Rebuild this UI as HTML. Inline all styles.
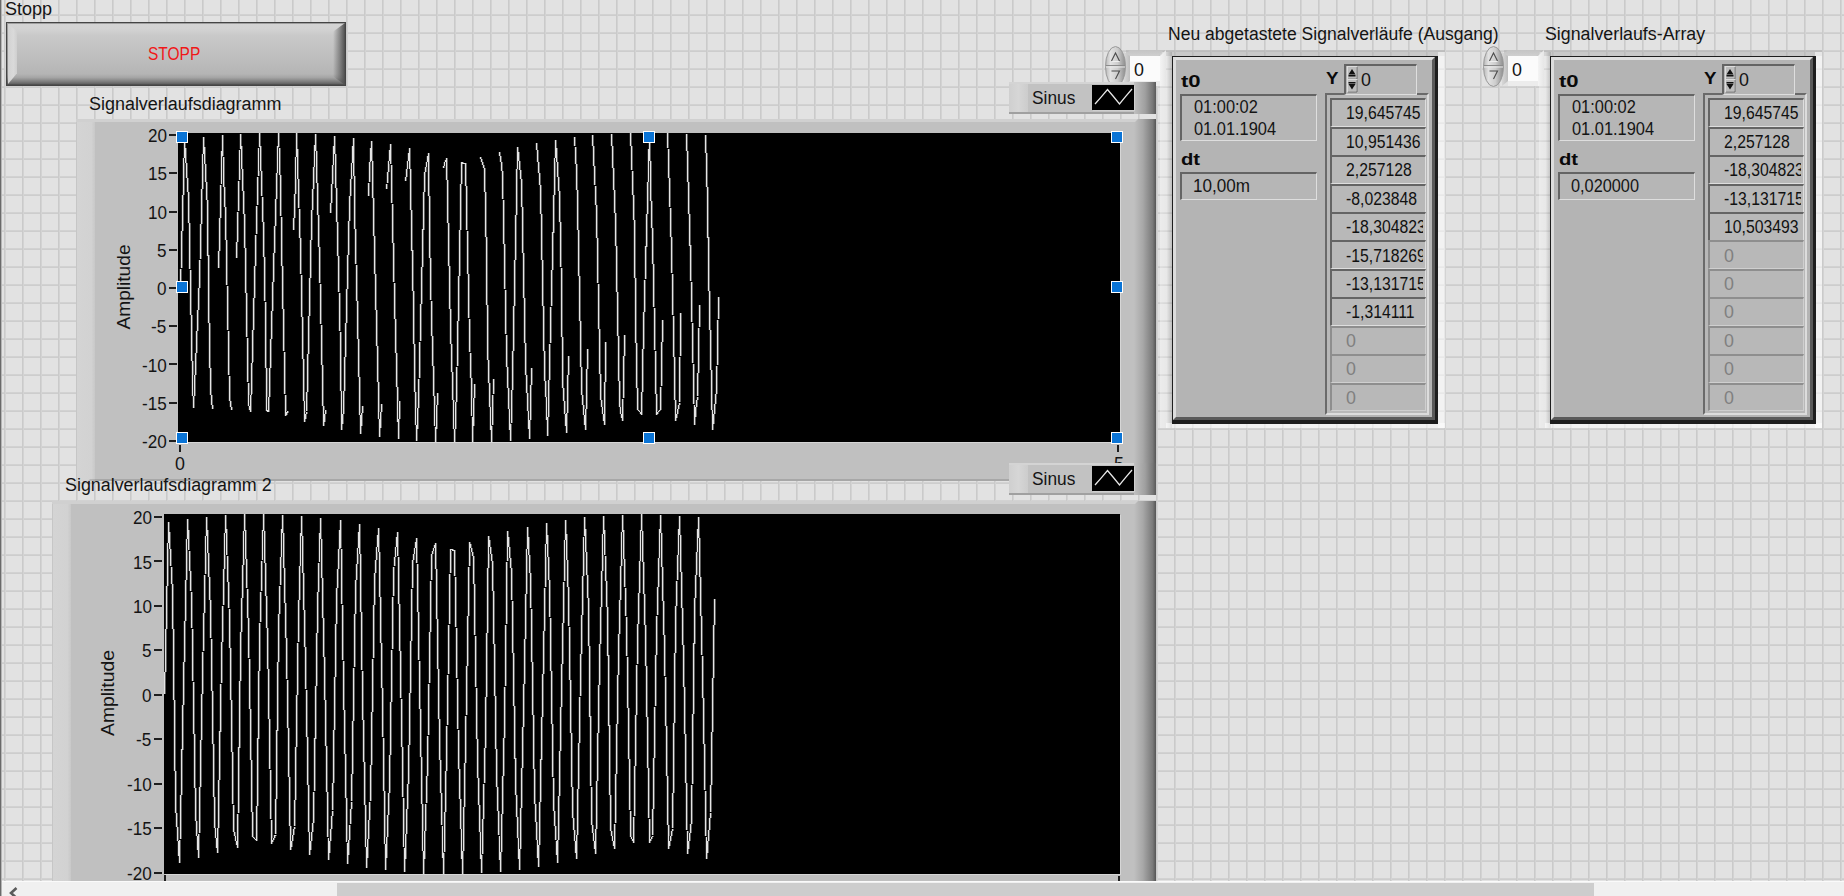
<!DOCTYPE html>
<html><head><meta charset="utf-8"><title>LabVIEW Front Panel</title>
<style>
html,body{margin:0;padding:0;width:1844px;height:896px;overflow:hidden}
body{position:relative;background-color:#e2e2e2;
background-image:linear-gradient(to right,#cacaca 0,#cacaca 1px,#d3d3d3 1px,#d3d3d3 2px,transparent 2px),linear-gradient(to bottom,#d2d2d2 0,#d2d2d2 1px,#cdcdcd 1px,#cdcdcd 2px,transparent 2px);
background-size:18px 18px,18px 18px;background-position:4px 0,0 14px;font-family:"Liberation Sans", sans-serif}
.t{position:absolute;white-space:pre;transform-origin:0 50%;display:block}
</style></head><body>
<div style="position:absolute;left:0px;top:0px;width:1px;height:896px;background:#6a6a6a;z-index:50"></div>
<div style="position:absolute;left:1px;top:0px;width:1px;height:896px;background:#b4b4b4;z-index:50"></div>
<span class="t" style="left:5.10px;top:0.06px;font-size:18px;line-height:18px;font-weight:400;color:#141414;transform:scaleX(1.0020);z-index:10">Stopp</span>
<div style="position:absolute;left:6px;top:22px;width:338px;height:62px;border:1px solid #454545;overflow:hidden;background:linear-gradient(to bottom,#d5d5d5 0,#d3d3d3 9%,#c9c9c9 20%,#c0c0c0 50%,#b5b5b5 82%,#a5a5a5 88%,#7a7a7a 95%,#555 100%);box-shadow:inset 0 0 0 1px rgba(60,60,60,.35)"><div style="position:absolute;left:1px;top:1px;width:9px;height:60px;background:linear-gradient(to right,#d2d2d2,#dadada 60%,#cfcfcf);clip-path:polygon(0 0,100% 12%,100% 82%,0 100%)"></div><div style="position:absolute;right:0;top:0;width:12px;height:62px;background:linear-gradient(to right,rgba(85,85,85,0),rgba(85,85,85,.55) 55%,#505050);clip-path:polygon(0 14%,100% 0,100% 100%,0 86%)"></div></div>
<span class="t" style="left:147.63px;top:45.06px;font-size:18px;line-height:18px;font-weight:400;color:#f01818;transform:scaleX(0.8606);z-index:10">STOPP</span>
<div style="position:absolute;left:76px;top:119px;width:1080px;height:362px;background:#c0c0c0;overflow:hidden"><div style="position:absolute;left:0;top:0;width:1px;height:100%;background:#c6c6c6"></div><div style="position:absolute;left:1px;top:0;width:18px;height:100%;background:linear-gradient(to right,#d4d4d4,#d2d2d2 80%,#c8c8c8)"></div><div style="position:absolute;left:0;top:0;width:100%;height:3px;background:#d0d0d0"></div><div style="position:absolute;left:12px;bottom:0;width:100%;height:2px;background:rgba(0,0,0,.13);clip-path:polygon(2px 0,100% 0,100% 100%,0 100%)"></div><div style="position:absolute;right:0;top:0;width:22px;height:100%;background:linear-gradient(to right,#c0c0c0,#a8a8a8 40%,#7a7a7a 85%,#555);clip-path:polygon(0 4px,4px 0,100% 0,100% 100%,0 100%)"></div></div>
<span class="t" style="left:88.70px;top:94.56px;font-size:18px;line-height:18px;font-weight:400;color:#141414;transform:scaleX(0.9966);z-index:10">Signalverlaufsdiagramm</span>
<div style="position:absolute;left:178px;top:133px;width:942px;height:309px;background:#000;box-shadow:1px 1px 0 #d6d6d6"></div>
<span class="t" style="left:147.65px;top:127.06px;font-size:18px;line-height:18px;font-weight:400;color:#141414;transform:scaleX(0.9500);z-index:10">20</span>
<div style="position:absolute;left:169px;top:134px;width:8px;height:2px;background:#1e1e1e"></div>
<span class="t" style="left:147.65px;top:165.31px;font-size:18px;line-height:18px;font-weight:400;color:#141414;transform:scaleX(0.9500);z-index:10">15</span>
<div style="position:absolute;left:169px;top:172px;width:8px;height:2px;background:#1e1e1e"></div>
<span class="t" style="left:147.65px;top:203.56px;font-size:18px;line-height:18px;font-weight:400;color:#141414;transform:scaleX(0.9500);z-index:10">10</span>
<div style="position:absolute;left:169px;top:211px;width:8px;height:2px;background:#1e1e1e"></div>
<span class="t" style="left:157.17px;top:241.81px;font-size:18px;line-height:18px;font-weight:400;color:#141414;transform:scaleX(0.9500);z-index:10">5</span>
<div style="position:absolute;left:169px;top:249px;width:8px;height:2px;background:#1e1e1e"></div>
<span class="t" style="left:157.17px;top:280.06px;font-size:18px;line-height:18px;font-weight:400;color:#141414;transform:scaleX(0.9500);z-index:10">0</span>
<div style="position:absolute;left:169px;top:287px;width:8px;height:2px;background:#1e1e1e"></div>
<span class="t" style="left:151.47px;top:318.31px;font-size:18px;line-height:18px;font-weight:400;color:#141414;transform:scaleX(0.9500);z-index:10">-5</span>
<div style="position:absolute;left:169px;top:325px;width:8px;height:2px;background:#1e1e1e"></div>
<span class="t" style="left:141.97px;top:356.56px;font-size:18px;line-height:18px;font-weight:400;color:#141414;transform:scaleX(0.9500);z-index:10">-10</span>
<div style="position:absolute;left:169px;top:363px;width:8px;height:2px;background:#1e1e1e"></div>
<span class="t" style="left:141.97px;top:394.81px;font-size:18px;line-height:18px;font-weight:400;color:#141414;transform:scaleX(0.9500);z-index:10">-15</span>
<div style="position:absolute;left:169px;top:402px;width:8px;height:2px;background:#1e1e1e"></div>
<span class="t" style="left:141.97px;top:433.06px;font-size:18px;line-height:18px;font-weight:400;color:#141414;transform:scaleX(0.9500);z-index:10">-20</span>
<div style="position:absolute;left:169px;top:440px;width:8px;height:2px;background:#1e1e1e"></div>
<span class="t" style="left:83.88px;top:277.50px;font-size:18px;line-height:18px;color:#141414;transform-origin:center;transform:rotate(-90deg) scaleX(1.0635);z-index:10">Amplitude</span>
<div style="position:absolute;left:179px;top:445px;width:2px;height:7px;background:#1e1e1e"></div>
<div style="position:absolute;left:1117px;top:445px;width:2px;height:7px;background:#1e1e1e"></div>
<span class="t" style="left:174.61px;top:455.26px;font-size:18px;line-height:18px;font-weight:400;color:#141414;transform:scaleX(0.9912);z-index:10">0</span>
<span class="t" style="left:1113.61px;top:455.26px;font-size:18px;line-height:18px;font-weight:400;color:#141414;transform:scaleX(0.9912);z-index:1">5</span>
<svg style="position:absolute;left:178px;top:133px" width="942" height="309"><g fill="none" stroke-width="1" shape-rendering="crispEdges"><g stroke="#606060"><polyline points="3.5,154.5 5.5,80.5 7.5,7.5 9.5,37.5 11.5,66.5 13.5,158.5 15.5,250.5 16.5,274.5 22.5,144.5 24.5,74.5 26.5,4.5 28.5,39.5 30.5,75.5 31.5,166.5 33.5,257.5 35.5,276.5"/><polyline points="41.5,135.5 43.5,68.5 45.5,2.5 46.5,43.5 48.5,83.5 50.5,174.5 52.5,264.5 54.5,277.5"/><polyline points="59.5,125.5 61.5,63.5 63.5,1.5 65.5,46.5 67.5,92.5 69.5,181.5 71.5,271.5 73.5,278.5 78.5,116.5 80.5,58.5 82.5,0.5 84.5,50.5 86.5,101.5 88.5,189.5 89.5,277.5 91.5,278.5 97.5,106.5 99.5,53.5 101.5,0.5 103.5,55.5 104.5,110.5 106.5,196.5 108.5,282.5 110.5,278.5"/><polyline points="116.5,97.5 118.5,49.5 119.5,0.5 121.5,60.5 123.5,119.5 125.5,204.5 127.5,288.5 129.5,278.5 134.5,88.5 136.5,45.5 138.5,1.5 140.5,65.5 142.5,129.5 144.5,211.5 146.5,292.5 148.5,277.5"/><polyline points="153.5,80.5 155.5,41.5 157.5,3.5 159.5,71.5 161.5,139.5 163.5,217.5 164.5,296.5 166.5,275.5 172.5,71.5 174.5,38.5 176.5,5.5 177.5,77.5 179.5,148.5 181.5,224.5 183.5,300.5 185.5,273.5"/><polyline points="191.5,63.5 192.5,36.5 194.5,8.5 196.5,83.5 198.5,158.5 200.5,230.5 202.5,303.5 204.5,271.5"/><polyline points="209.5,56.5 211.5,33.5 213.5,11.5 215.5,89.5 217.5,168.5 219.5,236.5 221.5,305.5 222.5,268.5"/><polyline points="228.5,48.5 230.5,32.5 232.5,15.5 234.5,96.5 236.5,177.5 237.5,242.5 239.5,307.5 241.5,264.5 247.5,41.5 249.5,31.5 251.5,20.5 252.5,103.5 254.5,187.5 256.5,247.5 258.5,308.5 260.5,260.5"/><polyline points="266.5,35.5 267.5,30.5 269.5,25.5 271.5,110.5 273.5,196.5 275.5,252.5 277.5,309.5 279.5,256.5 284.5,29.5 286.5,30.5 288.5,30.5 290.5,118.5 292.5,206.5 294.5,257.5 295.5,308.5 297.5,251.5"/><polyline points="303.5,24.5 305.5,30.5 307.5,36.5 309.5,125.5 310.5,215.5 312.5,261.5 314.5,308.5 316.5,246.5"/><polyline points="322.5,19.5 324.5,31.5 325.5,43.5 327.5,133.5 329.5,223.5 331.5,265.5 333.5,307.5 335.5,241.5 340.5,14.5 342.5,32.5 344.5,50.5 346.5,141.5 348.5,232.5 350.5,268.5 352.5,305.5 354.5,235.5"/><polyline points="359.5,10.5 361.5,34.5 363.5,57.5 365.5,149.5 367.5,240.5 369.5,271.5 370.5,302.5 372.5,229.5 378.5,7.5 380.5,36.5 382.5,65.5 384.5,156.5 385.5,248.5 387.5,274.5 389.5,299.5 391.5,223.5"/><polyline points="397.5,4.5 399.5,39.5 400.5,73.5 402.5,164.5 404.5,256.5 406.5,276.5 408.5,296.5 410.5,216.5"/><polyline points="415.5,2.5 417.5,42.5 419.5,81.5 421.5,172.5 423.5,263.5 425.5,277.5 427.5,291.5 428.5,209.5"/><polyline points="434.5,1.5 436.5,45.5 438.5,90.5 440.5,180.5 442.5,269.5 443.5,278.5 445.5,287.5 447.5,202.5"/><polyline points="453.5,0.5 455.5,49.5 457.5,99.5 458.5,187.5 460.5,276.5 462.5,278.5 464.5,281.5 466.5,195.5 472.5,0.5 473.5,54.5 475.5,108.5 477.5,195.5 479.5,281.5 481.5,278.5 483.5,276.5 485.5,187.5"/><polyline points="490.5,0.5 492.5,59.5 494.5,118.5 496.5,202.5 498.5,287.5 500.5,278.5 502.5,269.5 503.5,180.5"/><polyline points="509.5,1.5 511.5,64.5 513.5,127.5 515.5,209.5 517.5,291.5 518.5,277.5 520.5,263.5 522.5,172.5"/><polyline points="528.5,2.5 530.5,70.5 531.5,137.5 533.5,216.5 535.5,296.5 537.5,276.5 539.5,256.5 541.5,164.5"/></g><g stroke="#282828"><polyline points="1.5,154.5 3.5,80.5 5.5,7.5 7.5,37.5 9.5,66.5 11.5,158.5 13.5,250.5 14.5,274.5 20.5,144.5 22.5,74.5 24.5,4.5 26.5,39.5 28.5,75.5 29.5,166.5 31.5,257.5 33.5,276.5"/><polyline points="39.5,135.5 41.5,68.5 43.5,2.5 44.5,43.5 46.5,83.5 48.5,174.5 50.5,264.5 52.5,277.5"/><polyline points="57.5,125.5 59.5,63.5 61.5,1.5 63.5,46.5 65.5,92.5 67.5,181.5 69.5,271.5 71.5,278.5 76.5,116.5 78.5,58.5 80.5,0.5 82.5,50.5 84.5,101.5 86.5,189.5 87.5,277.5 89.5,278.5 95.5,106.5 97.5,53.5 99.5,0.5 101.5,55.5 102.5,110.5 104.5,196.5 106.5,282.5 108.5,278.5"/><polyline points="114.5,97.5 116.5,49.5 117.5,0.5 119.5,60.5 121.5,119.5 123.5,204.5 125.5,288.5 127.5,278.5 132.5,88.5 134.5,45.5 136.5,1.5 138.5,65.5 140.5,129.5 142.5,211.5 144.5,292.5 146.5,277.5"/><polyline points="151.5,80.5 153.5,41.5 155.5,3.5 157.5,71.5 159.5,139.5 161.5,217.5 162.5,296.5 164.5,275.5 170.5,71.5 172.5,38.5 174.5,5.5 175.5,77.5 177.5,148.5 179.5,224.5 181.5,300.5 183.5,273.5"/><polyline points="189.5,63.5 190.5,36.5 192.5,8.5 194.5,83.5 196.5,158.5 198.5,230.5 200.5,303.5 202.5,271.5"/><polyline points="207.5,56.5 209.5,33.5 211.5,11.5 213.5,89.5 215.5,168.5 217.5,236.5 219.5,305.5 220.5,268.5"/><polyline points="226.5,48.5 228.5,32.5 230.5,15.5 232.5,96.5 234.5,177.5 235.5,242.5 237.5,307.5 239.5,264.5 245.5,41.5 247.5,31.5 249.5,20.5 250.5,103.5 252.5,187.5 254.5,247.5 256.5,308.5 258.5,260.5"/><polyline points="264.5,35.5 265.5,30.5 267.5,25.5 269.5,110.5 271.5,196.5 273.5,252.5 275.5,309.5 277.5,256.5 282.5,29.5 284.5,30.5 286.5,30.5 288.5,118.5 290.5,206.5 292.5,257.5 293.5,308.5 295.5,251.5"/><polyline points="301.5,24.5 303.5,30.5 305.5,36.5 307.5,125.5 308.5,215.5 310.5,261.5 312.5,308.5 314.5,246.5"/><polyline points="320.5,19.5 322.5,31.5 323.5,43.5 325.5,133.5 327.5,223.5 329.5,265.5 331.5,307.5 333.5,241.5 338.5,14.5 340.5,32.5 342.5,50.5 344.5,141.5 346.5,232.5 348.5,268.5 350.5,305.5 352.5,235.5"/><polyline points="357.5,10.5 359.5,34.5 361.5,57.5 363.5,149.5 365.5,240.5 367.5,271.5 368.5,302.5 370.5,229.5 376.5,7.5 378.5,36.5 380.5,65.5 382.5,156.5 383.5,248.5 385.5,274.5 387.5,299.5 389.5,223.5"/><polyline points="395.5,4.5 397.5,39.5 398.5,73.5 400.5,164.5 402.5,256.5 404.5,276.5 406.5,296.5 408.5,216.5"/><polyline points="413.5,2.5 415.5,42.5 417.5,81.5 419.5,172.5 421.5,263.5 423.5,277.5 425.5,291.5 426.5,209.5"/><polyline points="432.5,1.5 434.5,45.5 436.5,90.5 438.5,180.5 440.5,269.5 441.5,278.5 443.5,287.5 445.5,202.5"/><polyline points="451.5,0.5 453.5,49.5 455.5,99.5 456.5,187.5 458.5,276.5 460.5,278.5 462.5,281.5 464.5,195.5 470.5,0.5 471.5,54.5 473.5,108.5 475.5,195.5 477.5,281.5 479.5,278.5 481.5,276.5 483.5,187.5"/><polyline points="488.5,0.5 490.5,59.5 492.5,118.5 494.5,202.5 496.5,287.5 498.5,278.5 500.5,269.5 501.5,180.5"/><polyline points="507.5,1.5 509.5,64.5 511.5,127.5 513.5,209.5 515.5,291.5 516.5,277.5 518.5,263.5 520.5,172.5"/><polyline points="526.5,2.5 528.5,70.5 529.5,137.5 531.5,216.5 533.5,296.5 535.5,276.5 537.5,256.5 539.5,164.5"/></g><g stroke="#e4e4e4"><polyline points="2.5,154.5 4.5,80.5 6.5,7.5 8.5,37.5 10.5,66.5 12.5,158.5 14.5,250.5 15.5,274.5 21.5,144.5 23.5,74.5 25.5,4.5 27.5,39.5 29.5,75.5 30.5,166.5 32.5,257.5 34.5,276.5"/><polyline points="40.5,135.5 42.5,68.5 44.5,2.5 45.5,43.5 47.5,83.5 49.5,174.5 51.5,264.5 53.5,277.5"/><polyline points="58.5,125.5 60.5,63.5 62.5,1.5 64.5,46.5 66.5,92.5 68.5,181.5 70.5,271.5 72.5,278.5 77.5,116.5 79.5,58.5 81.5,0.5 83.5,50.5 85.5,101.5 87.5,189.5 88.5,277.5 90.5,278.5 96.5,106.5 98.5,53.5 100.5,0.5 102.5,55.5 103.5,110.5 105.5,196.5 107.5,282.5 109.5,278.5"/><polyline points="115.5,97.5 117.5,49.5 118.5,0.5 120.5,60.5 122.5,119.5 124.5,204.5 126.5,288.5 128.5,278.5 133.5,88.5 135.5,45.5 137.5,1.5 139.5,65.5 141.5,129.5 143.5,211.5 145.5,292.5 147.5,277.5"/><polyline points="152.5,80.5 154.5,41.5 156.5,3.5 158.5,71.5 160.5,139.5 162.5,217.5 163.5,296.5 165.5,275.5 171.5,71.5 173.5,38.5 175.5,5.5 176.5,77.5 178.5,148.5 180.5,224.5 182.5,300.5 184.5,273.5"/><polyline points="190.5,63.5 191.5,36.5 193.5,8.5 195.5,83.5 197.5,158.5 199.5,230.5 201.5,303.5 203.5,271.5"/><polyline points="208.5,56.5 210.5,33.5 212.5,11.5 214.5,89.5 216.5,168.5 218.5,236.5 220.5,305.5 221.5,268.5"/><polyline points="227.5,48.5 229.5,32.5 231.5,15.5 233.5,96.5 235.5,177.5 236.5,242.5 238.5,307.5 240.5,264.5 246.5,41.5 248.5,31.5 250.5,20.5 251.5,103.5 253.5,187.5 255.5,247.5 257.5,308.5 259.5,260.5"/><polyline points="265.5,35.5 266.5,30.5 268.5,25.5 270.5,110.5 272.5,196.5 274.5,252.5 276.5,309.5 278.5,256.5 283.5,29.5 285.5,30.5 287.5,30.5 289.5,118.5 291.5,206.5 293.5,257.5 294.5,308.5 296.5,251.5"/><polyline points="302.5,24.5 304.5,30.5 306.5,36.5 308.5,125.5 309.5,215.5 311.5,261.5 313.5,308.5 315.5,246.5"/><polyline points="321.5,19.5 323.5,31.5 324.5,43.5 326.5,133.5 328.5,223.5 330.5,265.5 332.5,307.5 334.5,241.5 339.5,14.5 341.5,32.5 343.5,50.5 345.5,141.5 347.5,232.5 349.5,268.5 351.5,305.5 353.5,235.5"/><polyline points="358.5,10.5 360.5,34.5 362.5,57.5 364.5,149.5 366.5,240.5 368.5,271.5 369.5,302.5 371.5,229.5 377.5,7.5 379.5,36.5 381.5,65.5 383.5,156.5 384.5,248.5 386.5,274.5 388.5,299.5 390.5,223.5"/><polyline points="396.5,4.5 398.5,39.5 399.5,73.5 401.5,164.5 403.5,256.5 405.5,276.5 407.5,296.5 409.5,216.5"/><polyline points="414.5,2.5 416.5,42.5 418.5,81.5 420.5,172.5 422.5,263.5 424.5,277.5 426.5,291.5 427.5,209.5"/><polyline points="433.5,1.5 435.5,45.5 437.5,90.5 439.5,180.5 441.5,269.5 442.5,278.5 444.5,287.5 446.5,202.5"/><polyline points="452.5,0.5 454.5,49.5 456.5,99.5 457.5,187.5 459.5,276.5 461.5,278.5 463.5,281.5 465.5,195.5 471.5,0.5 472.5,54.5 474.5,108.5 476.5,195.5 478.5,281.5 480.5,278.5 482.5,276.5 484.5,187.5"/><polyline points="489.5,0.5 491.5,59.5 493.5,118.5 495.5,202.5 497.5,287.5 499.5,278.5 501.5,269.5 502.5,180.5"/><polyline points="508.5,1.5 510.5,64.5 512.5,127.5 514.5,209.5 516.5,291.5 517.5,277.5 519.5,263.5 521.5,172.5"/><polyline points="527.5,2.5 529.5,70.5 530.5,137.5 532.5,216.5 534.5,296.5 536.5,276.5 538.5,256.5 540.5,164.5"/></g></g></svg>
<div style="position:absolute;left:176px;top:131px;width:10px;height:10px;background:#0a74d6;border:1px solid #fff;z-index:5"></div>
<div style="position:absolute;left:176px;top:281px;width:10px;height:10px;background:#0a74d6;border:1px solid #fff;z-index:5"></div>
<div style="position:absolute;left:176px;top:432px;width:10px;height:10px;background:#0a74d6;border:1px solid #fff;z-index:5"></div>
<div style="position:absolute;left:643px;top:131px;width:10px;height:10px;background:#0a74d6;border:1px solid #fff;z-index:5"></div>
<div style="position:absolute;left:643px;top:432px;width:10px;height:10px;background:#0a74d6;border:1px solid #fff;z-index:5"></div>
<div style="position:absolute;left:1111px;top:131px;width:10px;height:10px;background:#0a74d6;border:1px solid #fff;z-index:5"></div>
<div style="position:absolute;left:1111px;top:281px;width:10px;height:10px;background:#0a74d6;border:1px solid #fff;z-index:5"></div>
<div style="position:absolute;left:1111px;top:432px;width:10px;height:10px;background:#0a74d6;border:1px solid #fff;z-index:5"></div>
<div style="position:absolute;left:1009px;top:82px;width:147px;height:32px;background:#c2c2c2;overflow:hidden;z-index:15"><div style="position:absolute;left:0;top:0;width:19px;height:100%;background:linear-gradient(to right,#cfcfcf,#d6d6d6 50%,#cccccc)"></div><div style="position:absolute;left:0;top:0;width:100%;height:2px;background:#d4d4d4"></div><div style="position:absolute;left:0;bottom:0;width:100%;height:2px;background:#a0a0a0"></div><div style="position:absolute;right:0;top:0;width:22px;height:100%;background:linear-gradient(to right,#c0c0c0,#a0a0a0 50%,#777 85%,#5a5a5a)"></div><div style="position:absolute;left:83px;top:3px;width:42px;height:25px;background:#000;box-shadow:1px 1px 0 #d0d0d0"><svg width="42" height="25" style="position:absolute;left:0;top:0"><polyline points="3,19 9.5,11.6 15.5,4.5 21,11 27.5,19 33.5,11.6 40,4" fill="none" stroke="#e8e8e8" stroke-width="1.3"/></svg></div></div>
<span class="t" style="left:1032.33px;top:88.56px;font-size:18px;line-height:18px;font-weight:400;color:#141414;transform:scaleX(0.9612);z-index:20">Sinus</span>
<div style="position:absolute;left:52px;top:501px;width:1104px;height:395px;background:#c0c0c0;overflow:hidden"><div style="position:absolute;left:0;top:0;width:1px;height:100%;background:#c6c6c6"></div><div style="position:absolute;left:1px;top:0;width:18px;height:100%;background:linear-gradient(to right,#d4d4d4,#d2d2d2 80%,#c8c8c8)"></div><div style="position:absolute;left:0;top:0;width:100%;height:3px;background:#d0d0d0"></div><div style="position:absolute;left:12px;bottom:0;width:100%;height:2px;background:rgba(0,0,0,.13);clip-path:polygon(2px 0,100% 0,100% 100%,0 100%)"></div><div style="position:absolute;right:0;top:0;width:22px;height:100%;background:linear-gradient(to right,#c0c0c0,#a8a8a8 40%,#7a7a7a 85%,#555);clip-path:polygon(0 4px,4px 0,100% 0,100% 100%,0 100%)"></div></div>
<div style="position:absolute;left:164px;top:514px;width:956px;height:360px;background:#000;box-shadow:1px 1px 0 #d6d6d6"></div>
<span class="t" style="left:132.65px;top:509.06px;font-size:18px;line-height:18px;font-weight:400;color:#141414;transform:scaleX(0.9500);z-index:10">20</span>
<div style="position:absolute;left:154px;top:516px;width:8px;height:2px;background:#1e1e1e"></div>
<span class="t" style="left:132.65px;top:553.51px;font-size:18px;line-height:18px;font-weight:400;color:#141414;transform:scaleX(0.9500);z-index:10">15</span>
<div style="position:absolute;left:154px;top:560px;width:8px;height:2px;background:#1e1e1e"></div>
<span class="t" style="left:132.65px;top:597.96px;font-size:18px;line-height:18px;font-weight:400;color:#141414;transform:scaleX(0.9500);z-index:10">10</span>
<div style="position:absolute;left:154px;top:605px;width:8px;height:2px;background:#1e1e1e"></div>
<span class="t" style="left:142.17px;top:642.41px;font-size:18px;line-height:18px;font-weight:400;color:#141414;transform:scaleX(0.9500);z-index:10">5</span>
<div style="position:absolute;left:154px;top:649px;width:8px;height:2px;background:#1e1e1e"></div>
<span class="t" style="left:142.17px;top:686.86px;font-size:18px;line-height:18px;font-weight:400;color:#141414;transform:scaleX(0.9500);z-index:10">0</span>
<div style="position:absolute;left:154px;top:694px;width:8px;height:2px;background:#1e1e1e"></div>
<span class="t" style="left:136.47px;top:731.31px;font-size:18px;line-height:18px;font-weight:400;color:#141414;transform:scaleX(0.9500);z-index:10">-5</span>
<div style="position:absolute;left:154px;top:738px;width:8px;height:2px;background:#1e1e1e"></div>
<span class="t" style="left:126.97px;top:775.76px;font-size:18px;line-height:18px;font-weight:400;color:#141414;transform:scaleX(0.9500);z-index:10">-10</span>
<div style="position:absolute;left:154px;top:783px;width:8px;height:2px;background:#1e1e1e"></div>
<span class="t" style="left:126.97px;top:820.21px;font-size:18px;line-height:18px;font-weight:400;color:#141414;transform:scaleX(0.9500);z-index:10">-15</span>
<div style="position:absolute;left:154px;top:827px;width:8px;height:2px;background:#1e1e1e"></div>
<span class="t" style="left:126.97px;top:864.66px;font-size:18px;line-height:18px;font-weight:400;color:#141414;transform:scaleX(0.9500);z-index:10">-20</span>
<div style="position:absolute;left:154px;top:872px;width:8px;height:2px;background:#1e1e1e"></div>
<span class="t" style="left:68.48px;top:683.80px;font-size:18px;line-height:18px;color:#141414;transform-origin:center;transform:rotate(-90deg) scaleX(1.0750);z-index:10">Amplitude</span>
<svg style="position:absolute;left:164px;top:514px" width="956" height="360"><g fill="none" stroke-width="1" shape-rendering="crispEdges"><g stroke="#606060"><polyline points="1.5,180.5 5.5,8.5 9.5,78.5 12.5,291.5 16.5,348.5 20.5,169.5 24.5,5.5 28.5,87.5 32.5,299.5 35.5,343.5 39.5,157.5 43.5,3.5 47.5,97.5 51.5,308.5 54.5,338.5 58.5,146.5 62.5,1.5 66.5,107.5 70.5,315.5 74.5,333.5 77.5,135.5 81.5,0.5 85.5,118.5 89.5,322.5 93.5,326.5 96.5,124.5 100.5,0.5 104.5,129.5 108.5,329.5 112.5,320.5 115.5,114.5 119.5,1.5 123.5,140.5 127.5,335.5 131.5,312.5 135.5,103.5 138.5,2.5 142.5,151.5 146.5,340.5 150.5,304.5 154.5,93.5 157.5,4.5 161.5,162.5 165.5,345.5 169.5,296.5 173.5,84.5 177.5,6.5 180.5,173.5 184.5,349.5 188.5,287.5 192.5,74.5 196.5,10.5 199.5,184.5 203.5,353.5 207.5,278.5 211.5,65.5 215.5,14.5 219.5,196.5 222.5,355.5 226.5,268.5 230.5,57.5 234.5,18.5 238.5,207.5 241.5,357.5 245.5,258.5 249.5,49.5 253.5,24.5 257.5,218.5 260.5,359.5 264.5,248.5 268.5,41.5 272.5,29.5 276.5,229.5 280.5,359.5 283.5,237.5 287.5,35.5 291.5,36.5 295.5,240.5 299.5,359.5 302.5,227.5 306.5,28.5 310.5,43.5 314.5,250.5 318.5,358.5 322.5,216.5 325.5,22.5 329.5,50.5 333.5,260.5 337.5,357.5 341.5,205.5 344.5,17.5 348.5,59.5 352.5,270.5 356.5,355.5 360.5,193.5 364.5,13.5 367.5,67.5 371.5,280.5 375.5,352.5 379.5,182.5 383.5,9.5 386.5,76.5 390.5,289.5 394.5,348.5 398.5,171.5 402.5,6.5 405.5,85.5 409.5,298.5 413.5,344.5 417.5,160.5 421.5,3.5 425.5,95.5 428.5,306.5 432.5,339.5 436.5,148.5 440.5,2.5 444.5,105.5 447.5,314.5 451.5,334.5 455.5,137.5 459.5,1.5 463.5,116.5 467.5,321.5 470.5,328.5 474.5,126.5 478.5,0.5 482.5,126.5 486.5,328.5 489.5,321.5 493.5,116.5 497.5,1.5 501.5,137.5 505.5,334.5 509.5,314.5 512.5,105.5 516.5,2.5 520.5,148.5 524.5,339.5 528.5,306.5 531.5,95.5 535.5,3.5 539.5,160.5 543.5,344.5 547.5,298.5 551.5,85.5"/></g><g stroke="#282828"><polyline points="-0.5,180.5 3.5,8.5 7.5,78.5 10.5,291.5 14.5,348.5 18.5,169.5 22.5,5.5 26.5,87.5 30.5,299.5 33.5,343.5 37.5,157.5 41.5,3.5 45.5,97.5 49.5,308.5 52.5,338.5 56.5,146.5 60.5,1.5 64.5,107.5 68.5,315.5 72.5,333.5 75.5,135.5 79.5,0.5 83.5,118.5 87.5,322.5 91.5,326.5 94.5,124.5 98.5,0.5 102.5,129.5 106.5,329.5 110.5,320.5 113.5,114.5 117.5,1.5 121.5,140.5 125.5,335.5 129.5,312.5 133.5,103.5 136.5,2.5 140.5,151.5 144.5,340.5 148.5,304.5 152.5,93.5 155.5,4.5 159.5,162.5 163.5,345.5 167.5,296.5 171.5,84.5 175.5,6.5 178.5,173.5 182.5,349.5 186.5,287.5 190.5,74.5 194.5,10.5 197.5,184.5 201.5,353.5 205.5,278.5 209.5,65.5 213.5,14.5 217.5,196.5 220.5,355.5 224.5,268.5 228.5,57.5 232.5,18.5 236.5,207.5 239.5,357.5 243.5,258.5 247.5,49.5 251.5,24.5 255.5,218.5 258.5,359.5 262.5,248.5 266.5,41.5 270.5,29.5 274.5,229.5 278.5,359.5 281.5,237.5 285.5,35.5 289.5,36.5 293.5,240.5 297.5,359.5 300.5,227.5 304.5,28.5 308.5,43.5 312.5,250.5 316.5,358.5 320.5,216.5 323.5,22.5 327.5,50.5 331.5,260.5 335.5,357.5 339.5,205.5 342.5,17.5 346.5,59.5 350.5,270.5 354.5,355.5 358.5,193.5 362.5,13.5 365.5,67.5 369.5,280.5 373.5,352.5 377.5,182.5 381.5,9.5 384.5,76.5 388.5,289.5 392.5,348.5 396.5,171.5 400.5,6.5 403.5,85.5 407.5,298.5 411.5,344.5 415.5,160.5 419.5,3.5 423.5,95.5 426.5,306.5 430.5,339.5 434.5,148.5 438.5,2.5 442.5,105.5 445.5,314.5 449.5,334.5 453.5,137.5 457.5,1.5 461.5,116.5 465.5,321.5 468.5,328.5 472.5,126.5 476.5,0.5 480.5,126.5 484.5,328.5 487.5,321.5 491.5,116.5 495.5,1.5 499.5,137.5 503.5,334.5 507.5,314.5 510.5,105.5 514.5,2.5 518.5,148.5 522.5,339.5 526.5,306.5 529.5,95.5 533.5,3.5 537.5,160.5 541.5,344.5 545.5,298.5 549.5,85.5"/></g><g stroke="#e4e4e4"><polyline points="0.5,180.5 4.5,8.5 8.5,78.5 11.5,291.5 15.5,348.5 19.5,169.5 23.5,5.5 27.5,87.5 31.5,299.5 34.5,343.5 38.5,157.5 42.5,3.5 46.5,97.5 50.5,308.5 53.5,338.5 57.5,146.5 61.5,1.5 65.5,107.5 69.5,315.5 73.5,333.5 76.5,135.5 80.5,0.5 84.5,118.5 88.5,322.5 92.5,326.5 95.5,124.5 99.5,0.5 103.5,129.5 107.5,329.5 111.5,320.5 114.5,114.5 118.5,1.5 122.5,140.5 126.5,335.5 130.5,312.5 134.5,103.5 137.5,2.5 141.5,151.5 145.5,340.5 149.5,304.5 153.5,93.5 156.5,4.5 160.5,162.5 164.5,345.5 168.5,296.5 172.5,84.5 176.5,6.5 179.5,173.5 183.5,349.5 187.5,287.5 191.5,74.5 195.5,10.5 198.5,184.5 202.5,353.5 206.5,278.5 210.5,65.5 214.5,14.5 218.5,196.5 221.5,355.5 225.5,268.5 229.5,57.5 233.5,18.5 237.5,207.5 240.5,357.5 244.5,258.5 248.5,49.5 252.5,24.5 256.5,218.5 259.5,359.5 263.5,248.5 267.5,41.5 271.5,29.5 275.5,229.5 279.5,359.5 282.5,237.5 286.5,35.5 290.5,36.5 294.5,240.5 298.5,359.5 301.5,227.5 305.5,28.5 309.5,43.5 313.5,250.5 317.5,358.5 321.5,216.5 324.5,22.5 328.5,50.5 332.5,260.5 336.5,357.5 340.5,205.5 343.5,17.5 347.5,59.5 351.5,270.5 355.5,355.5 359.5,193.5 363.5,13.5 366.5,67.5 370.5,280.5 374.5,352.5 378.5,182.5 382.5,9.5 385.5,76.5 389.5,289.5 393.5,348.5 397.5,171.5 401.5,6.5 404.5,85.5 408.5,298.5 412.5,344.5 416.5,160.5 420.5,3.5 424.5,95.5 427.5,306.5 431.5,339.5 435.5,148.5 439.5,2.5 443.5,105.5 446.5,314.5 450.5,334.5 454.5,137.5 458.5,1.5 462.5,116.5 466.5,321.5 469.5,328.5 473.5,126.5 477.5,0.5 481.5,126.5 485.5,328.5 488.5,321.5 492.5,116.5 496.5,1.5 500.5,137.5 504.5,334.5 508.5,314.5 511.5,105.5 515.5,2.5 519.5,148.5 523.5,339.5 527.5,306.5 530.5,95.5 534.5,3.5 538.5,160.5 542.5,344.5 546.5,298.5 550.5,85.5"/></g></g></svg>
<span class="t" style="left:64.71px;top:475.86px;font-size:18px;line-height:18px;font-weight:400;color:#141414;transform:scaleX(0.9929);z-index:20">Signalverlaufsdiagramm 2</span>
<div style="position:absolute;left:1009px;top:463px;width:147px;height:32px;background:#c2c2c2;overflow:hidden;z-index:15"><div style="position:absolute;left:0;top:0;width:19px;height:100%;background:linear-gradient(to right,#cfcfcf,#d6d6d6 50%,#cccccc)"></div><div style="position:absolute;left:0;top:0;width:100%;height:2px;background:#d4d4d4"></div><div style="position:absolute;left:0;bottom:0;width:100%;height:2px;background:#a0a0a0"></div><div style="position:absolute;right:0;top:0;width:22px;height:100%;background:linear-gradient(to right,#c0c0c0,#a0a0a0 50%,#777 85%,#5a5a5a)"></div><div style="position:absolute;left:83px;top:3px;width:42px;height:25px;background:#000;box-shadow:1px 1px 0 #d0d0d0"><svg width="42" height="25" style="position:absolute;left:0;top:0"><polyline points="3,19 9.5,11.6 15.5,4.5 21,11 27.5,19 33.5,11.6 40,4" fill="none" stroke="#e8e8e8" stroke-width="1.3"/></svg></div></div>
<span class="t" style="left:1032.33px;top:469.56px;font-size:18px;line-height:18px;font-weight:400;color:#141414;transform:scaleX(0.9612);z-index:20">Sinus</span>
<div style="position:absolute;left:164px;top:875px;width:2px;height:6px;background:#1e1e1e"></div>
<div style="position:absolute;left:1118px;top:876px;width:2px;height:5px;background:#1e1e1e"></div>
<div style="position:absolute;left:0px;top:881px;width:1844px;height:15px;background:#f0f0f0;border-top:1px solid #fafafa;z-index:30"></div>
<div style="position:absolute;left:337px;top:883px;width:1257px;height:13px;background:#cdcdcd;z-index:31"></div>
<svg style="position:absolute;left:6px;top:886px;z-index:32" width="14" height="10"><polyline points="10.5,2 5,7 10.5,12" fill="none" stroke="#5a5a5a" stroke-width="2.6"/></svg>
<div style="position:absolute;left:1126px;top:50px;width:36px;height:6px;background:rgba(170,170,170,.45)"></div>
<div style="position:absolute;left:1160px;top:50px;width:285px;height:6px;background:rgba(170,170,170,.45)"></div>
<div style="position:absolute;left:1160px;top:52px;width:12px;height:376px;background:linear-gradient(to right,rgba(255,255,255,.35),rgba(255,255,255,.2) 55%,rgba(110,110,110,.3))"></div>
<div style="position:absolute;left:1438px;top:52px;width:7px;height:376px;background:rgba(255,255,255,.55)"></div>
<div style="position:absolute;left:1166px;top:423px;width:279px;height:5px;background:rgba(255,255,255,.55)"></div>
<svg style="position:absolute;left:1105px;top:46px;z-index:4" width="22" height="42"><defs><linearGradient id="sg1105" x1="0" x2="1" y1="0" y2="0"><stop offset="0" stop-color="#b8b8b8"/><stop offset=".25" stop-color="#e2e2e2"/><stop offset=".6" stop-color="#cdcdcd"/><stop offset="1" stop-color="#8c8c8c"/></linearGradient></defs><ellipse cx="10.5" cy="20.5" rx="10" ry="20" fill="url(#sg1105)" stroke="#9a9a9a" stroke-width="1"/><line x1="1" y1="19.5" x2="20" y2="19.5" stroke="#8a8a8a" stroke-width="1"/><line x1="1" y1="21" x2="20" y2="21" stroke="#e8e8e8" stroke-width="1"/><path d="M6.5,15 L10.5,7 L14.5,15" fill="none" stroke="#4a4a4a" stroke-width="1.1"/><path d="M6.5,15.5 L14.5,15.5" stroke="#eeeeee" stroke-width="1"/><path d="M6.5,25 L14.5,25 L10.5,33" fill="none" stroke="#4a4a4a" stroke-width="1.1"/></svg>
<div style="position:absolute;left:1124px;top:50px;width:40px;height:6px;background:linear-gradient(to bottom,#c4c4c4,#cfcfcf);clip-path:polygon(0 100%,6px 0,100% 0,calc(100% - 6px) 100%)"></div>
<div style="position:absolute;left:1124px;top:52px;width:6px;height:34px;background:linear-gradient(to right,#d8d8d8,#bdbdbd);clip-path:polygon(0 0,100% 4px,100% calc(100% - 5px),0 100%)"></div>
<div style="position:absolute;left:1130px;top:81px;width:34px;height:5px;background:#ececec"></div>
<div style="position:absolute;left:1160px;top:50px;width:6px;height:36px;background:linear-gradient(to right,#f4f4f4,#e6e6e6);clip-path:polygon(0 6px,100% 0,100% 100%,0 100%)"></div>
<div style="position:absolute;left:1130px;top:56px;width:30px;height:25px;background:#fbfbfb;z-index:4"></div>
<span class="t" style="left:1133.61px;top:61.26px;font-size:18px;line-height:18px;font-weight:400;color:#141414;transform:scaleX(0.9912);z-index:10">0</span>
<div style="position:absolute;left:1504px;top:50px;width:36px;height:6px;background:rgba(170,170,170,.45)"></div>
<div style="position:absolute;left:1539px;top:50px;width:283px;height:6px;background:rgba(170,170,170,.45)"></div>
<div style="position:absolute;left:1539px;top:52px;width:12px;height:376px;background:linear-gradient(to right,rgba(255,255,255,.35),rgba(255,255,255,.2) 55%,rgba(110,110,110,.3))"></div>
<div style="position:absolute;left:1815px;top:52px;width:7px;height:376px;background:rgba(255,255,255,.55)"></div>
<div style="position:absolute;left:1545px;top:423px;width:277px;height:5px;background:rgba(255,255,255,.55)"></div>
<svg style="position:absolute;left:1483px;top:46px;z-index:4" width="22" height="42"><defs><linearGradient id="sg1483" x1="0" x2="1" y1="0" y2="0"><stop offset="0" stop-color="#b8b8b8"/><stop offset=".25" stop-color="#e2e2e2"/><stop offset=".6" stop-color="#cdcdcd"/><stop offset="1" stop-color="#8c8c8c"/></linearGradient></defs><ellipse cx="10.5" cy="20.5" rx="10" ry="20" fill="url(#sg1483)" stroke="#9a9a9a" stroke-width="1"/><line x1="1" y1="19.5" x2="20" y2="19.5" stroke="#8a8a8a" stroke-width="1"/><line x1="1" y1="21" x2="20" y2="21" stroke="#e8e8e8" stroke-width="1"/><path d="M6.5,15 L10.5,7 L14.5,15" fill="none" stroke="#4a4a4a" stroke-width="1.1"/><path d="M6.5,15.5 L14.5,15.5" stroke="#eeeeee" stroke-width="1"/><path d="M6.5,25 L14.5,25 L10.5,33" fill="none" stroke="#4a4a4a" stroke-width="1.1"/></svg>
<div style="position:absolute;left:1502px;top:50px;width:40px;height:6px;background:linear-gradient(to bottom,#c4c4c4,#cfcfcf);clip-path:polygon(0 100%,6px 0,100% 0,calc(100% - 6px) 100%)"></div>
<div style="position:absolute;left:1502px;top:52px;width:6px;height:34px;background:linear-gradient(to right,#d8d8d8,#bdbdbd);clip-path:polygon(0 0,100% 4px,100% calc(100% - 5px),0 100%)"></div>
<div style="position:absolute;left:1508px;top:81px;width:34px;height:5px;background:#ececec"></div>
<div style="position:absolute;left:1538px;top:50px;width:6px;height:36px;background:linear-gradient(to right,#f4f4f4,#e6e6e6);clip-path:polygon(0 6px,100% 0,100% 100%,0 100%)"></div>
<div style="position:absolute;left:1508px;top:56px;width:30px;height:25px;background:#fbfbfb;z-index:4"></div>
<span class="t" style="left:1511.61px;top:61.26px;font-size:18px;line-height:18px;font-weight:400;color:#141414;transform:scaleX(0.9912);z-index:10">0</span>
<span class="t" style="left:1168.02px;top:25.36px;font-size:18px;line-height:18px;font-weight:400;color:#141414;transform:scaleX(0.9746);z-index:10">Neu abgetastete Signalverläufe (Ausgang)</span>
<span class="t" style="left:1545.41px;top:25.26px;font-size:18px;line-height:18px;font-weight:400;color:#141414;transform:scaleX(0.9880);z-index:10">Signalverlaufs-Array</span>
<div style="position:absolute;left:1172px;top:56px;width:266px;height:368px;background:#1e1e1e"></div>
<div style="position:absolute;left:1173px;top:57px;width:262px;height:363px;background:#b4b4b4;border-top:3px solid #e0e0e0;border-left:3px solid #dcdcdc;border-right:3px solid #5a5a5a;border-bottom:3px solid #5a5a5a;box-sizing:border-box"></div>
<span class="t" style="left:1180.69px;top:73.01px;font-size:17px;line-height:17px;font-weight:700;color:#0a0a0a;transform:scaleX(1.3004);z-index:10">t0</span>
<div style="position:absolute;left:1180px;top:94px;width:137px;height:47px;background:#b6b6b6;border-top:2px solid #646464;border-left:2px solid #646464;border-bottom:1px solid #dedede;border-right:1px solid #dedede;box-sizing:border-box"></div>
<span class="t" style="left:1194.38px;top:97.66px;font-size:18px;line-height:18px;font-weight:400;color:#141414;transform:scaleX(0.9106);z-index:10">01:00:02</span>
<span class="t" style="left:1194.38px;top:119.96px;font-size:18px;line-height:18px;font-weight:400;color:#141414;transform:scaleX(0.9114);z-index:10">01.01.1904</span>
<span class="t" style="left:1180.79px;top:150.51px;font-size:17px;line-height:17px;font-weight:700;color:#0a0a0a;transform:scaleX(1.1915);z-index:10">dt</span>
<div style="position:absolute;left:1180px;top:172px;width:137px;height:28px;background:#b6b6b6;border-top:2px solid #646464;border-left:2px solid #646464;border-bottom:1px solid #dedede;border-right:1px solid #dedede;box-sizing:border-box"></div>
<span class="t" style="left:1193.35px;top:177.26px;font-size:18px;line-height:18px;font-weight:400;color:#141414;transform:scaleX(0.9487);z-index:10">10,00m</span>
<span class="t" style="left:1326.06px;top:69.91px;font-size:17px;line-height:17px;font-weight:700;color:#0a0a0a;transform:scaleX(1.1018);z-index:10">Y</span>
<div style="position:absolute;left:1325px;top:93px;width:104px;height:322px;border-top:2px solid #6a6a6a;border-left:2px solid #6a6a6a;border-bottom:2px solid #dcdcdc;border-right:2px solid #dcdcdc;box-sizing:border-box;background:#b8b8b8"></div>
<div style="position:absolute;left:1344px;top:64px;width:73px;height:31px;background:#b6b6b6;border-top:2px solid #646464;border-left:2px solid #646464;border-bottom:1px solid #dedede;border-right:1px solid #dedede;box-sizing:border-box"></div>
<svg style="position:absolute;left:1347px;top:66px;z-index:6" width="11" height="27"><rect x="0.5" y="0.5" width="9" height="12" fill="#bdbdbd" stroke="#dcdcdc"/><path d="M10,1 L10,13 L1,13" fill="none" stroke="#6a6a6a"/><rect x="0.5" y="13.5" width="9" height="12" fill="#bdbdbd" stroke="#dcdcdc"/><path d="M10,14 L10,26 L1,26" fill="none" stroke="#6a6a6a"/><polygon points="5,3 8.5,8.5 1.5,8.5" fill="#111"/><rect x="1.5" y="9" width="7" height="1.5" fill="#111"/><rect x="1.5" y="16" width="7" height="1.5" fill="#111"/><polygon points="1.5,18 8.5,18 5,23.5" fill="#111"/></svg>
<span class="t" style="left:1360.61px;top:70.76px;font-size:18px;line-height:18px;font-weight:400;color:#141414;transform:scaleX(0.9912);z-index:10">0</span>
<div style="position:absolute;left:1330px;top:98px;width:96px;height:29px;background:#b8b8b8;border-top:2px solid #646464;border-left:2px solid #646464;border-bottom:1px solid #dedede;border-right:1px solid #dedede;box-sizing:border-box"></div>
<div style="position:absolute;left:1332px;top:100px;width:91px;height:26px;overflow:hidden;z-index:10">
<span class="t" style="left:13.81px;top:4.26px;font-size:18px;line-height:18px;font-weight:400;color:#111;transform:scaleX(0.8750);z-index:10">19,645745</span>
</div>
<div style="position:absolute;left:1330px;top:127px;width:96px;height:29px;background:#b8b8b8;border-top:2px solid #646464;border-left:2px solid #646464;border-bottom:1px solid #dedede;border-right:1px solid #dedede;box-sizing:border-box"></div>
<div style="position:absolute;left:1332px;top:129px;width:91px;height:26px;overflow:hidden;z-index:10">
<span class="t" style="left:13.81px;top:3.71px;font-size:18px;line-height:18px;font-weight:400;color:#111;transform:scaleX(0.8750);z-index:10">10,951436</span>
</div>
<div style="position:absolute;left:1330px;top:155px;width:96px;height:29px;background:#b8b8b8;border-top:2px solid #646464;border-left:2px solid #646464;border-bottom:1px solid #dedede;border-right:1px solid #dedede;box-sizing:border-box"></div>
<div style="position:absolute;left:1332px;top:157px;width:91px;height:26px;overflow:hidden;z-index:10">
<span class="t" style="left:13.81px;top:4.16px;font-size:18px;line-height:18px;font-weight:400;color:#111;transform:scaleX(0.8750);z-index:10">2,257128</span>
</div>
<div style="position:absolute;left:1330px;top:184px;width:96px;height:29px;background:#b8b8b8;border-top:2px solid #646464;border-left:2px solid #646464;border-bottom:1px solid #dedede;border-right:1px solid #dedede;box-sizing:border-box"></div>
<div style="position:absolute;left:1332px;top:186px;width:91px;height:26px;overflow:hidden;z-index:10">
<span class="t" style="left:13.81px;top:3.61px;font-size:18px;line-height:18px;font-weight:400;color:#111;transform:scaleX(0.8750);z-index:10">-8,023848</span>
</div>
<div style="position:absolute;left:1330px;top:212px;width:96px;height:29px;background:#b8b8b8;border-top:2px solid #646464;border-left:2px solid #646464;border-bottom:1px solid #dedede;border-right:1px solid #dedede;box-sizing:border-box"></div>
<div style="position:absolute;left:1332px;top:214px;width:91px;height:26px;overflow:hidden;z-index:10">
<span class="t" style="left:13.81px;top:4.06px;font-size:18px;line-height:18px;font-weight:400;color:#111;transform:scaleX(0.8750);z-index:10">-18,304823</span>
</div>
<div style="position:absolute;left:1330px;top:240px;width:96px;height:29px;background:#b8b8b8;border-top:2px solid #646464;border-left:2px solid #646464;border-bottom:1px solid #dedede;border-right:1px solid #dedede;box-sizing:border-box"></div>
<div style="position:absolute;left:1332px;top:242px;width:91px;height:26px;overflow:hidden;z-index:10">
<span class="t" style="left:13.81px;top:4.51px;font-size:18px;line-height:18px;font-weight:400;color:#111;transform:scaleX(0.8750);z-index:10">-15,718269</span>
</div>
<div style="position:absolute;left:1330px;top:269px;width:96px;height:29px;background:#b8b8b8;border-top:2px solid #646464;border-left:2px solid #646464;border-bottom:1px solid #dedede;border-right:1px solid #dedede;box-sizing:border-box"></div>
<div style="position:absolute;left:1332px;top:271px;width:91px;height:26px;overflow:hidden;z-index:10">
<span class="t" style="left:13.81px;top:3.96px;font-size:18px;line-height:18px;font-weight:400;color:#111;transform:scaleX(0.8750);z-index:10">-13,131715</span>
</div>
<div style="position:absolute;left:1330px;top:297px;width:96px;height:29px;background:#b8b8b8;border-top:2px solid #646464;border-left:2px solid #646464;border-bottom:1px solid #dedede;border-right:1px solid #dedede;box-sizing:border-box"></div>
<div style="position:absolute;left:1332px;top:299px;width:91px;height:26px;overflow:hidden;z-index:10">
<span class="t" style="left:13.81px;top:4.41px;font-size:18px;line-height:18px;font-weight:400;color:#111;transform:scaleX(0.8750);z-index:10">-1,314111</span>
</div>
<div style="position:absolute;left:1330px;top:326px;width:96px;height:29px;background:#b8b8b8;border-top:2px solid #8e8e8e;border-left:2px solid #8e8e8e;border-bottom:1px solid #cfcfcf;border-right:1px solid #cfcfcf;box-sizing:border-box"></div>
<div style="position:absolute;left:1332px;top:328px;width:91px;height:26px;overflow:hidden;z-index:10">
<span class="t" style="left:13.71px;top:3.86px;font-size:18px;line-height:18px;font-weight:400;color:#808080;transform:scaleX(0.9912);z-index:10">0</span>
</div>
<div style="position:absolute;left:1330px;top:354px;width:96px;height:29px;background:#b8b8b8;border-top:2px solid #8e8e8e;border-left:2px solid #8e8e8e;border-bottom:1px solid #cfcfcf;border-right:1px solid #cfcfcf;box-sizing:border-box"></div>
<div style="position:absolute;left:1332px;top:356px;width:91px;height:26px;overflow:hidden;z-index:10">
<span class="t" style="left:13.71px;top:4.31px;font-size:18px;line-height:18px;font-weight:400;color:#808080;transform:scaleX(0.9912);z-index:10">0</span>
</div>
<div style="position:absolute;left:1330px;top:383px;width:96px;height:28px;background:#b8b8b8;border-top:2px solid #8e8e8e;border-left:2px solid #8e8e8e;border-bottom:1px solid #cfcfcf;border-right:1px solid #cfcfcf;box-sizing:border-box"></div>
<div style="position:absolute;left:1332px;top:385px;width:91px;height:26px;overflow:hidden;z-index:10">
<span class="t" style="left:13.71px;top:3.76px;font-size:18px;line-height:18px;font-weight:400;color:#808080;transform:scaleX(0.9912);z-index:10">0</span>
</div>
<div style="position:absolute;left:1550px;top:56px;width:266px;height:368px;background:#1e1e1e"></div>
<div style="position:absolute;left:1551px;top:57px;width:262px;height:363px;background:#b4b4b4;border-top:3px solid #e0e0e0;border-left:3px solid #dcdcdc;border-right:3px solid #5a5a5a;border-bottom:3px solid #5a5a5a;box-sizing:border-box"></div>
<span class="t" style="left:1558.69px;top:73.01px;font-size:17px;line-height:17px;font-weight:700;color:#0a0a0a;transform:scaleX(1.3004);z-index:10">t0</span>
<div style="position:absolute;left:1558px;top:94px;width:137px;height:47px;background:#b6b6b6;border-top:2px solid #646464;border-left:2px solid #646464;border-bottom:1px solid #dedede;border-right:1px solid #dedede;box-sizing:border-box"></div>
<span class="t" style="left:1572.38px;top:97.66px;font-size:18px;line-height:18px;font-weight:400;color:#141414;transform:scaleX(0.9106);z-index:10">01:00:02</span>
<span class="t" style="left:1572.38px;top:119.96px;font-size:18px;line-height:18px;font-weight:400;color:#141414;transform:scaleX(0.9114);z-index:10">01.01.1904</span>
<span class="t" style="left:1558.79px;top:150.51px;font-size:17px;line-height:17px;font-weight:700;color:#0a0a0a;transform:scaleX(1.1915);z-index:10">dt</span>
<div style="position:absolute;left:1558px;top:172px;width:137px;height:28px;background:#b6b6b6;border-top:2px solid #646464;border-left:2px solid #646464;border-bottom:1px solid #dedede;border-right:1px solid #dedede;box-sizing:border-box"></div>
<span class="t" style="left:1571.38px;top:177.26px;font-size:18px;line-height:18px;font-weight:400;color:#141414;transform:scaleX(0.9058);z-index:10">0,020000</span>
<span class="t" style="left:1704.06px;top:69.91px;font-size:17px;line-height:17px;font-weight:700;color:#0a0a0a;transform:scaleX(1.1018);z-index:10">Y</span>
<div style="position:absolute;left:1703px;top:93px;width:104px;height:322px;border-top:2px solid #6a6a6a;border-left:2px solid #6a6a6a;border-bottom:2px solid #dcdcdc;border-right:2px solid #dcdcdc;box-sizing:border-box;background:#b8b8b8"></div>
<div style="position:absolute;left:1722px;top:64px;width:73px;height:31px;background:#b6b6b6;border-top:2px solid #646464;border-left:2px solid #646464;border-bottom:1px solid #dedede;border-right:1px solid #dedede;box-sizing:border-box"></div>
<svg style="position:absolute;left:1725px;top:66px;z-index:6" width="11" height="27"><rect x="0.5" y="0.5" width="9" height="12" fill="#bdbdbd" stroke="#dcdcdc"/><path d="M10,1 L10,13 L1,13" fill="none" stroke="#6a6a6a"/><rect x="0.5" y="13.5" width="9" height="12" fill="#bdbdbd" stroke="#dcdcdc"/><path d="M10,14 L10,26 L1,26" fill="none" stroke="#6a6a6a"/><polygon points="5,3 8.5,8.5 1.5,8.5" fill="#111"/><rect x="1.5" y="9" width="7" height="1.5" fill="#111"/><rect x="1.5" y="16" width="7" height="1.5" fill="#111"/><polygon points="1.5,18 8.5,18 5,23.5" fill="#111"/></svg>
<span class="t" style="left:1738.61px;top:70.76px;font-size:18px;line-height:18px;font-weight:400;color:#141414;transform:scaleX(0.9912);z-index:10">0</span>
<div style="position:absolute;left:1708px;top:98px;width:96px;height:29px;background:#b8b8b8;border-top:2px solid #646464;border-left:2px solid #646464;border-bottom:1px solid #dedede;border-right:1px solid #dedede;box-sizing:border-box"></div>
<div style="position:absolute;left:1710px;top:100px;width:91px;height:26px;overflow:hidden;z-index:10">
<span class="t" style="left:13.81px;top:4.26px;font-size:18px;line-height:18px;font-weight:400;color:#111;transform:scaleX(0.8750);z-index:10">19,645745</span>
</div>
<div style="position:absolute;left:1708px;top:127px;width:96px;height:29px;background:#b8b8b8;border-top:2px solid #646464;border-left:2px solid #646464;border-bottom:1px solid #dedede;border-right:1px solid #dedede;box-sizing:border-box"></div>
<div style="position:absolute;left:1710px;top:129px;width:91px;height:26px;overflow:hidden;z-index:10">
<span class="t" style="left:13.81px;top:3.71px;font-size:18px;line-height:18px;font-weight:400;color:#111;transform:scaleX(0.8750);z-index:10">2,257128</span>
</div>
<div style="position:absolute;left:1708px;top:155px;width:96px;height:29px;background:#b8b8b8;border-top:2px solid #646464;border-left:2px solid #646464;border-bottom:1px solid #dedede;border-right:1px solid #dedede;box-sizing:border-box"></div>
<div style="position:absolute;left:1710px;top:157px;width:91px;height:26px;overflow:hidden;z-index:10">
<span class="t" style="left:13.81px;top:4.16px;font-size:18px;line-height:18px;font-weight:400;color:#111;transform:scaleX(0.8750);z-index:10">-18,304823</span>
</div>
<div style="position:absolute;left:1708px;top:184px;width:96px;height:29px;background:#b8b8b8;border-top:2px solid #646464;border-left:2px solid #646464;border-bottom:1px solid #dedede;border-right:1px solid #dedede;box-sizing:border-box"></div>
<div style="position:absolute;left:1710px;top:186px;width:91px;height:26px;overflow:hidden;z-index:10">
<span class="t" style="left:13.81px;top:3.61px;font-size:18px;line-height:18px;font-weight:400;color:#111;transform:scaleX(0.8750);z-index:10">-13,131715</span>
</div>
<div style="position:absolute;left:1708px;top:212px;width:96px;height:29px;background:#b8b8b8;border-top:2px solid #646464;border-left:2px solid #646464;border-bottom:1px solid #dedede;border-right:1px solid #dedede;box-sizing:border-box"></div>
<div style="position:absolute;left:1710px;top:214px;width:91px;height:26px;overflow:hidden;z-index:10">
<span class="t" style="left:13.81px;top:4.06px;font-size:18px;line-height:18px;font-weight:400;color:#111;transform:scaleX(0.8750);z-index:10">10,503493</span>
</div>
<div style="position:absolute;left:1708px;top:240px;width:96px;height:29px;background:#b8b8b8;border-top:2px solid #8e8e8e;border-left:2px solid #8e8e8e;border-bottom:1px solid #cfcfcf;border-right:1px solid #cfcfcf;box-sizing:border-box"></div>
<div style="position:absolute;left:1710px;top:242px;width:91px;height:26px;overflow:hidden;z-index:10">
<span class="t" style="left:13.71px;top:4.51px;font-size:18px;line-height:18px;font-weight:400;color:#808080;transform:scaleX(0.9912);z-index:10">0</span>
</div>
<div style="position:absolute;left:1708px;top:269px;width:96px;height:29px;background:#b8b8b8;border-top:2px solid #8e8e8e;border-left:2px solid #8e8e8e;border-bottom:1px solid #cfcfcf;border-right:1px solid #cfcfcf;box-sizing:border-box"></div>
<div style="position:absolute;left:1710px;top:271px;width:91px;height:26px;overflow:hidden;z-index:10">
<span class="t" style="left:13.71px;top:3.96px;font-size:18px;line-height:18px;font-weight:400;color:#808080;transform:scaleX(0.9912);z-index:10">0</span>
</div>
<div style="position:absolute;left:1708px;top:297px;width:96px;height:29px;background:#b8b8b8;border-top:2px solid #8e8e8e;border-left:2px solid #8e8e8e;border-bottom:1px solid #cfcfcf;border-right:1px solid #cfcfcf;box-sizing:border-box"></div>
<div style="position:absolute;left:1710px;top:299px;width:91px;height:26px;overflow:hidden;z-index:10">
<span class="t" style="left:13.71px;top:4.41px;font-size:18px;line-height:18px;font-weight:400;color:#808080;transform:scaleX(0.9912);z-index:10">0</span>
</div>
<div style="position:absolute;left:1708px;top:326px;width:96px;height:29px;background:#b8b8b8;border-top:2px solid #8e8e8e;border-left:2px solid #8e8e8e;border-bottom:1px solid #cfcfcf;border-right:1px solid #cfcfcf;box-sizing:border-box"></div>
<div style="position:absolute;left:1710px;top:328px;width:91px;height:26px;overflow:hidden;z-index:10">
<span class="t" style="left:13.71px;top:3.86px;font-size:18px;line-height:18px;font-weight:400;color:#808080;transform:scaleX(0.9912);z-index:10">0</span>
</div>
<div style="position:absolute;left:1708px;top:354px;width:96px;height:29px;background:#b8b8b8;border-top:2px solid #8e8e8e;border-left:2px solid #8e8e8e;border-bottom:1px solid #cfcfcf;border-right:1px solid #cfcfcf;box-sizing:border-box"></div>
<div style="position:absolute;left:1710px;top:356px;width:91px;height:26px;overflow:hidden;z-index:10">
<span class="t" style="left:13.71px;top:4.31px;font-size:18px;line-height:18px;font-weight:400;color:#808080;transform:scaleX(0.9912);z-index:10">0</span>
</div>
<div style="position:absolute;left:1708px;top:383px;width:96px;height:28px;background:#b8b8b8;border-top:2px solid #8e8e8e;border-left:2px solid #8e8e8e;border-bottom:1px solid #cfcfcf;border-right:1px solid #cfcfcf;box-sizing:border-box"></div>
<div style="position:absolute;left:1710px;top:385px;width:91px;height:26px;overflow:hidden;z-index:10">
<span class="t" style="left:13.71px;top:3.76px;font-size:18px;line-height:18px;font-weight:400;color:#808080;transform:scaleX(0.9912);z-index:10">0</span>
</div>
</body></html>
